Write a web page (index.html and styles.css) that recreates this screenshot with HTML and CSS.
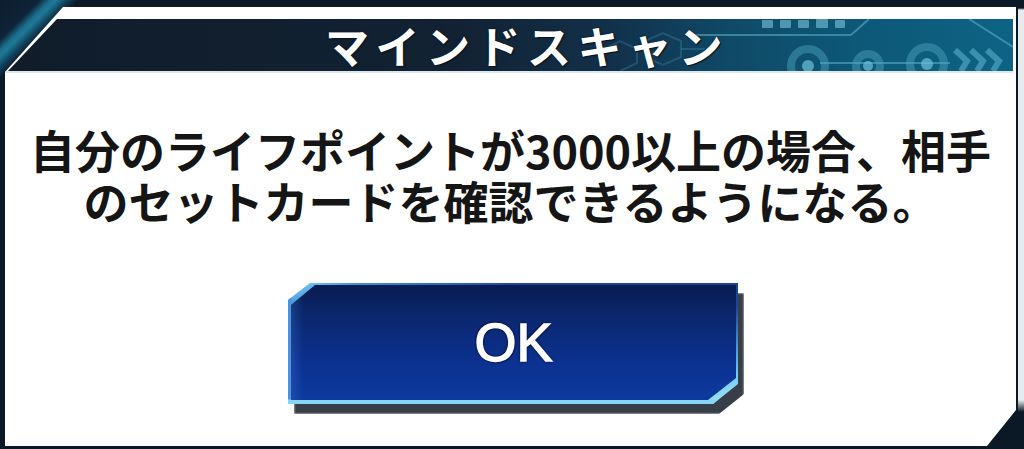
FILE: index.html
```html
<!DOCTYPE html>
<html lang="ja">
<head>
<meta charset="utf-8">
<title>マインドスキャン</title>
<link rel="stylesheet" href="styles.css">
</head>
<body>
<div class="screen">
  <div class="panel-wrap">
    <div class="panel">
      <div class="header">
        <svg class="deco" viewBox="0 0 1008 52" preserveAspectRatio="none" aria-hidden="true">
          <g fill="none" stroke="#4fa6c4" stroke-opacity="0.25" stroke-width="2">
            <path d="M600 30 L615 22 L632 30 L632 44 L615 52"/>
            <path d="M640 22 L658 14 L676 22 L676 38 L658 46 L640 38 Z"/>
            <path d="M676 30 L700 30"/>
          </g>
          <g fill="none" stroke="#5fb3cf" stroke-opacity="0.55" stroke-width="2">
            <path d="M690 16 L846 16 L864 0"/>
            <path d="M964 0 L1008 28"/>
            <path d="M815 44 L945 44"/>
          </g>
          <g fill="#7cc6dc" fill-opacity="0.6">
            <rect x="757" y="1" width="11" height="8" rx="1"/>
            <rect x="775" y="1" width="11" height="8" rx="1"/>
            <rect x="793" y="1" width="11" height="8" rx="1"/>
            <rect x="811" y="0" width="12" height="9" rx="1"/>
            <rect x="830" y="1" width="10" height="8" rx="1"/>
          </g>
          <g fill="none" stroke="#4fa7c2" stroke-opacity="0.45" stroke-width="8">
            <circle cx="803" cy="47" r="17"/>
            <circle cx="863" cy="47" r="12"/>
            <circle cx="922" cy="45" r="17"/>
          </g>
          <g fill="#6cc2d8" fill-opacity="0.7">
            <circle cx="803" cy="47" r="6"/>
            <circle cx="863" cy="47" r="5"/>
            <circle cx="922" cy="45" r="6"/>
          </g>
          <g fill="none" stroke="#5fb8d2" stroke-opacity="0.55" stroke-width="6" stroke-linecap="butt">
            <path d="M950 31 L962 42 L956 52"/>
            <path d="M966 31 L978 42 L972 52"/>
            <path d="M982 31 L994 42 L988 52"/>
          </g>
        </svg>
        <h1 class="title">マインドスキャン</h1>
      </div>
      <div class="rule"></div>
      <div class="message">
        <p class="line">自分のライフポイントが3000以上の場合、相手</p>
        <p class="line">のセットカードを確認できるようになる。</p>
      </div>
      <div class="actions">
        <div class="ok-wrap">
          <div class="ok-shadow"></div>
          <div class="ok">
            <div class="ok-face">OK</div>
          </div>
        </div>
      </div>
    </div>
  </div>
  <div class="edge"></div>
</div>
</body>
</html>
```

FILE: styles.css
```css
* { box-sizing: border-box; }

html, body {
  margin: 0;
  padding: 0;
  background: #0b1826;
}

.screen {
  width: 1024px;
  height: 449px;
  display: flex;
  overflow: hidden;
  background:
    linear-gradient(135deg, #0d1d30 0px, #0f2236 28px, #1a6e8c 36px, #1d7896 40px, #113f5a 48px, #0b1826 56px);
}

.panel-wrap {
  width: 1018px;
  padding: 7px 2px 3px 5px;
}

.panel {
  width: 1011px;
  height: 439px;
  background: #ffffff;
  clip-path: polygon(58px 0, 100% 0, 100% 403px, 982px 100%, 0 100%, 0 65px);
  padding-top: 12px;
  display: flex;
  flex-direction: column;
}

.header {
  position: relative;
  height: 52px;
  margin-right: 3px;
  background: linear-gradient(90deg, #101c2a 0%, #122233 45%, #12304a 60%, #0f4a68 72%, #0d5878 85%, #0e6384 100%);
  clip-path: polygon(52px 0, 100% 0, 100% 100%, 3px 100%);
  display: flex;
  align-items: center;
  justify-content: center;
  padding-left: 36px;
}

.deco {
  position: absolute;
  left: 0;
  top: 0;
  width: 100%;
  height: 100%;
}

.title {
  position: relative;
  margin: 0;
  font-family: "Noto Sans CJK JP", "Noto Sans", sans-serif;
  font-weight: 700;
  font-size: 44px;
  line-height: 52px;
  letter-spacing: 6.5px;
  color: #ffffff;
  text-shadow: 0 0 2px #0a1420, 1px 1px 1px #0a1420;
}

.rule {
  height: 2px;
  margin-right: 3px;
  background: #dbe8ef;
}

.message {
  margin-top: 51px;
  display: flex;
  flex-direction: column;
  align-items: center;
}

.line {
  margin: 0;
  height: 51px;
  font-family: "Noto Sans CJK JP", "Noto Sans", sans-serif;
  font-weight: 700;
  font-size: 45px;
  line-height: 51px;
  color: #151515;
  white-space: nowrap;
}

.actions {
  margin-top: 57px;
  display: flex;
  justify-content: center;
  padding-left: 5px;
}

.ok-wrap {
  position: relative;
  width: 450px;
  height: 121px;
}

.ok-shadow {
  position: absolute;
  left: 6px;
  top: 10px;
  width: 450px;
  height: 121px;
  background: #383e48;
  clip-path: polygon(22px 0, 100% 0, 100% calc(100% - 20px), calc(100% - 25px) 100%, 0 100%, 0 17px);
  filter: blur(1px);
}

.ok {
  position: relative;
  width: 450px;
  height: 121px;
  padding: 2px 2px 4px 3px;
  background:
    linear-gradient(0deg, #86d4f6 0px, #86d4f6 4px, rgba(134, 212, 246, 0) 5px),
    linear-gradient(90deg, #4d92dc 0px, #4d92dc 3px, rgba(77, 146, 220, 0) 4px),
    linear-gradient(160deg, #82dafd 0%, #3f92d8 9%, #1d4696 30%, #1c4594 65%, #6bc2ee 88%, #aeeeff 100%);
  clip-path: polygon(22px 0, 100% 0, 100% calc(100% - 20px), calc(100% - 25px) 100%, 0 100%, 0 17px);
}

.ok-face {
  width: 100%;
  height: 100%;
  display: flex;
  align-items: center;
  justify-content: center;
  background:
    linear-gradient(90deg, rgba(60, 120, 210, 0.3) 0px, rgba(60, 120, 210, 0) 12px),
    linear-gradient(180deg, #0a1c50 0%, #0b276f 28%, #0c3190 68%, #0d3a9f 100%);
  clip-path: polygon(24px 0, 100% 0, 100% calc(100% - 22px), calc(100% - 28px) 100%, 0 100%, 0 20px);
  font-family: "Liberation Sans", Arial, sans-serif;
  font-size: 54px;
  font-weight: 400;
  color: #ffffff;
  -webkit-text-stroke: 1.4px #ffffff;
  text-shadow: 0 0 2px #061030, 1px 1px 2px #061030, -1px -1px 2px #061030;
  padding-bottom: 2px;
}

.edge {
  width: 6px;
  height: 449px;
  background: linear-gradient(180deg, #0b1826 0px, #0b1826 8px, #e6ebee 10px, #e6ebee 400px, #0b1826 412px);
}
```
